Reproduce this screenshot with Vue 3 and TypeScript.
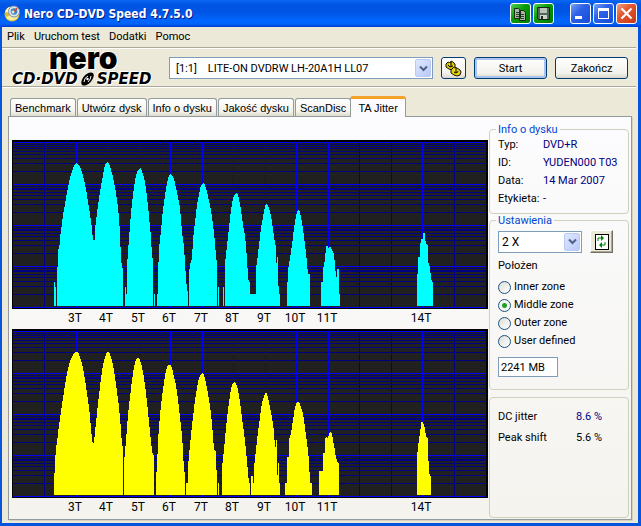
<script setup lang="ts">
import { ref } from 'vue'

type Point = [number, number]
interface Chart { name: string; color: string; peaks: Point[][] }

const BASE = 166
const menus = ['Plik', 'Uruchom test', 'Dodatki', 'Pomoc']
const tabs = ['Benchmark', 'Utwórz dysk', 'Info o dysku', 'Jakość dysku', 'ScanDisc', 'TA Jitter']
const activeTab = ref('TA Jitter')
const zones = ['Inner zone', 'Middle zone', 'Outer zone', 'User defined']
const zone = ref('Middle zone')
const position = ref('2241 MB')
const discInfo = [
  ['Typ:', 'DVD+R'],
  ['ID:', 'YUDEN000 T03'],
  ['Data:', '14 Mar 2007'],
  ['Etykieta:', '-'],
]

const decades = [2, 44, 85, 126, 167]
const minorOffsets = [2, 4, 6, 9, 12, 16, 21, 29]
const minors = decades.slice(0, 4).flatMap((d, i) => minorOffsets.map((o) => d + o - (i > 0 ? 1 : 0) + (i > 0 && o < 5 ? 1 : 0)))
const dimColumns = [32, 347, 379, 442]
const columns = [
  { x: 64, label: '3T' }, { x: 95, label: '4T' }, { x: 127, label: '5T' },
  { x: 158, label: '6T' }, { x: 190, label: '7T' }, { x: 221, label: '8T' },
  { x: 253, label: '9T' }, { x: 284, label: '10T' }, { x: 316, label: '11T' },
  { x: 410, label: '14T' },
]

const charts: Chart[] = [
  {
    name: 'Pit jitter',
    color: '#00ffff',
    peaks: [
      [[42, 142], [43, 142], [43, 147], [44, 147]],
      [[45, 127], [46, 127], [46, 107], [47, 110], [48, 100], [49, 89], [50, 85], [51, 74], [53, 65], [54, 57], [56, 48], [58, 38], [60, 31], [62, 26], [64, 23], [66, 24], [68, 27], [70, 32], [72, 40], [74, 49], [76, 62], [78, 74], [80, 89], [81, 100], [83, 100], [83, 89], [85, 73], [87, 58], [89, 46], [91, 35], [93, 25], [95, 22], [97, 23], [99, 30], [101, 37], [103, 47], [105, 60], [107, 77], [108, 95], [109, 118], [110, 128], [111, 128]],
      [[113, 147], [114, 147], [114, 154], [115, 154], [115, 128], [116, 110], [117, 100], [118, 85], [119, 73], [121, 55], [123, 40], [125, 32], [127, 29], [129, 28], [131, 34], [133, 42], [135, 57], [137, 75], [138, 88], [139, 95], [140, 118], [141, 118]],
      [[142, 154], [143, 154]],
      [[145, 154], [146, 154], [146, 134], [147, 110], [148, 98], [149, 92], [150, 78], [152, 62], [154, 49], [156, 38], [158, 34], [160, 35], [162, 39], [164, 48], [166, 57], [168, 68], [170, 92], [172, 107], [173, 122], [174, 140], [175, 147], [176, 154]],
      [[177, 134], [178, 125], [180, 118], [181, 100], [183, 82], [185, 65], [187, 54], [189, 45], [191, 43], [193, 45], [195, 52], [197, 61], [199, 70], [201, 85], [203, 102], [204, 118], [205, 122]],
      [[206, 147], [207, 147]],
      [[211, 147], [212, 147]],
      [[213, 124], [215, 105], [217, 88], [219, 70], [221, 58], [223, 54], [225, 52], [227, 59], [229, 70], [231, 85], [233, 95], [235, 118], [236, 137], [237, 142], [238, 142], [238, 154], [244, 154], [244, 128], [245, 122], [247, 105], [249, 88], [251, 77], [253, 67], [254, 64], [256, 65], [258, 71], [260, 82], [262, 97], [264, 108], [264, 123], [265, 123], [265, 117], [266, 117], [266, 137], [267, 154], [268, 154]],
      [[275, 154], [276, 130], [278, 118], [280, 105], [282, 88], [284, 76], [286, 70], [288, 72], [290, 82], [292, 97], [294, 113], [296, 134], [298, 134]],
      [[309, 142], [311, 142], [311, 129], [313, 120], [314, 106], [316, 106], [317, 109], [318, 106], [320, 110], [322, 114], [324, 137], [325, 137], [325, 129], [327, 129], [327, 154], [328, 154]],
      [[405, 134], [406, 134], [406, 117], [408, 117], [408, 107], [409, 99], [411, 99], [411, 93], [413, 93], [413, 100], [415, 105], [416, 105], [416, 122], [418, 127], [419, 138], [420, 142], [421, 142]],
    ],
  },
  {
    name: 'Land jitter',
    color: '#ffff00',
    peaks: [
      [[42, 154], [43, 134], [44, 119], [45, 113], [47, 96], [49, 83], [51, 69], [53, 56], [55, 44], [57, 36], [59, 30], [61, 26], [63, 23], [65, 23], [67, 25], [69, 31], [71, 39], [73, 51], [75, 64], [77, 78], [79, 99], [80, 111], [81, 115], [82, 113], [83, 103], [85, 84], [87, 66], [89, 49], [91, 36], [93, 28], [95, 23], [97, 23], [99, 28], [101, 36], [103, 48], [105, 63], [107, 78], [109, 101], [110, 116], [111, 118]],
      [[112, 133], [113, 124], [114, 111], [116, 86], [118, 68], [120, 51], [122, 38], [124, 30], [126, 29], [128, 31], [130, 38], [132, 49], [134, 64], [136, 83], [138, 103], [140, 121], [141, 126], [142, 126]],
      [[144, 148], [145, 139], [146, 111], [148, 86], [150, 68], [152, 53], [154, 41], [156, 36], [159, 36], [161, 43], [162, 48], [164, 56], [166, 71], [168, 88], [170, 106], [171, 121], [172, 143], [173, 143]],
      [[174, 154], [176, 154], [176, 139], [177, 126], [179, 106], [181, 88], [183, 71], [185, 59], [187, 49], [189, 45], [191, 44], [193, 49], [195, 59], [197, 71], [199, 84], [201, 106], [202, 121], [204, 123], [204, 141], [205, 141]],
      [[206, 154], [207, 154]],
      [[210, 138], [212, 121], [214, 99], [216, 81], [218, 66], [220, 56], [222, 53], [224, 54], [226, 61], [228, 73], [230, 89], [232, 104], [234, 121], [236, 143], [237, 154], [238, 154]],
      [[239, 147], [241, 147], [241, 154], [242, 154], [242, 138], [244, 121], [246, 103], [248, 88], [250, 74], [252, 67], [254, 63], [256, 68], [258, 78], [260, 88], [262, 103], [263, 118], [264, 118], [264, 111], [265, 111], [265, 146], [266, 146], [266, 134], [267, 134], [267, 154], [268, 154]],
      [[273, 154], [275, 154], [275, 128], [277, 128], [277, 111], [279, 104], [281, 91], [283, 78], [285, 73], [287, 73], [289, 78], [291, 84], [293, 99], [295, 114], [297, 131], [298, 154], [300, 154]],
      [[307, 142], [311, 142], [311, 124], [313, 124], [313, 109], [315, 108], [316, 110], [317, 104], [318, 103], [320, 104], [321, 111], [322, 116], [324, 129], [326, 134], [327, 134]],
      [[405, 129], [406, 118], [408, 104], [409, 96], [410, 91], [411, 94], [413, 99], [414, 108], [416, 109], [416, 121], [417, 142], [418, 147], [419, 147]],
    ],
  },
]

function outline(points: Point[]): string {
  const first = points[0][0]
  const last = points[points.length - 1][0]
  return `M${first} ${BASE}` + points.map(([x, y]) => `L${x} ${y}`).join('') + `L${last} ${BASE}Z`
}
</script>

<template>
  <div class="window">
    <header class="titlebar">
      <svg class="app-icon" width="17" height="17" viewBox="0 0 17 17" aria-hidden="true">
        <circle cx="8" cy="9" r="7.5" fill="#d8ba35" />
        <path d="M2 12A7 7 0 0 0 14 12L9 9Z" fill="#f8ed9b" />
        <path d="M1 7Q3 1 9 2L7 8Z" fill="#fff6b8" />
        <circle cx="10" cy="6.500" r="5.500" fill="#dfe6ed" stroke="#8090a8" />
        <circle cx="10" cy="6.500" r="3.300" fill="#3b87bd" />
        <path d="M10 7L13 3" stroke="#e34523" stroke-width="1.500" />
        <circle cx="9" cy="7" r="1.500" fill="#c7f0f4" />
      </svg>
      <h1>Nero CD-DVD Speed 4.7.5.0</h1>
      <div class="caption-group">
        <button class="cap green" aria-label="Kopiuj">
          <svg width="19" height="19" viewBox="0 0 19 19"><path d="M3.500 4.500h4l2 2v8h-6zM8.500 6.500h4l2 2v8h-6z" fill="#aab5a6" stroke="#162c16" /><path d="M5 8.500h3M5 10.500h3M5 12.500h3M10 10.500h3M10 12.500h3M10 14.500h3" stroke="#294329" /></svg>
        </button>
        <button class="cap green" aria-label="Zapisz">
          <svg width="19" height="19" viewBox="0 0 19 19"><path d="M3.500 3.500h12v12h-11l-1-1z" fill="#53665a" stroke="#122812" /><path d="M6 4h7v5H6z" fill="#b9c3b9" /><path d="M6 11h7v4H6z" fill="#ccd3cc" /><path d="M7 12h2v3H7z" fill="#1c2b1c" /></svg>
        </button>
      </div>
      <div class="caption-group">
        <button class="cap blue" aria-label="Minimalizuj"><svg width="19" height="19" viewBox="0 0 19 19"><path d="M4 12h7v3H4z" fill="#fff" /></svg></button>
        <button class="cap blue" aria-label="Maksymalizuj"><svg width="19" height="19" viewBox="0 0 19 19"><path d="M4 4h11v11H4zM5 7v7h9V7z" fill="#fff" fill-rule="evenodd" /></svg></button>
        <button class="cap red" aria-label="Zamknij"><svg width="19" height="19" viewBox="0 0 19 19"><path d="M4.500 4.500l10 10M14.500 4.500l-10 10" stroke="#fff" stroke-width="2.200" /></svg></button>
      </div>
    </header>

    <nav class="menubar">
      <button v-for="item in menus" :key="item">{{ item }}</button>
    </nav>

    <div class="toolbar">
      <div class="logo">
        <div class="logo-nero">nero</div>
        <div class="logo-speed">
          <span>CD·DVD</span>
          <svg width="15" height="14" viewBox="0 0 15 14" aria-hidden="true">
            <ellipse cx="7.500" cy="7" rx="8" ry="4.300" transform="rotate(-48 7.500 7)" fill="#000" />
            <path d="M4 10Q4 6 8 4M8 10Q11 7 11 4" fill="none" stroke="#fff" />
            <circle cx="7.500" cy="7" r="1.200" fill="#fff" />
          </svg>
          <span>SPEED</span>
        </div>
      </div>
      <div class="combo drive">
        <select aria-label="Napęd"><option>[1:1] &nbsp;&nbsp; LITE-ON DVDRW LH-20A1H LL07</option></select>
        <span class="arrow"><svg width="9" height="7" viewBox="0 0 9 7"><path d="M1 1.500l3.500 3.500L8 1.500" fill="none" stroke="#4d6185" stroke-width="2" /></svg></span>
      </div>
      <button class="push icon-push" aria-label="Opcje">
        <svg width="17" height="17" viewBox="0 0 17 17">
          <path d="M1 4l2-2 2 1 1-2 2 1 2 2v3l-3 3-3-1-3-2z" fill="#d4c400" stroke="#191500" />
          <path d="M6 10l3-3 3 1 3 2 1 2-1 3-3 1-3-1-3-2z" fill="#e3d300" stroke="#191500" />
          <path d="M6 2v4M3 5l2 2 3-1M11 8v4M9 12l2 1 3-2" fill="none" stroke="#000" />
          <path d="M4 4h1M8 6h1M9 10h1M13 11h1" stroke="#fff59a" />
        </svg>
      </button>
      <button class="push wide default">Start</button>
      <button class="push wide">Zakończ</button>
    </div>

    <main>
      <div class="tabs" role="tablist">
        <button v-for="tab in tabs" :key="tab" role="tab" :aria-selected="tab === activeTab" :class="{ active: tab === activeTab }" @click="activeTab = tab">{{ tab }}</button>
      </div>

      <section class="panel">
        <div class="charts">
          <svg v-for="chart in charts" :key="chart.name" class="chart" viewBox="0 0 476 189" role="img" :aria-label="chart.name">
            <g shape-rendering="crispEdges">
              <rect width="476" height="169" fill="#000" />
              <rect x="1" y="2" width="473" height="166" fill="#202020" />
              <rect v-for="y in minors" :key="'m' + y" x="1" :y="y" width="473" height="1" fill="#000084" />
              <rect v-for="x in dimColumns" :key="'d' + x" :x="x" y="2" width="1" height="166" fill="#000084" />
              <rect v-for="y in decades" :key="'h' + y" x="1" :y="y" width="473" height="1" fill="#0000ff" />
              <rect v-for="c in columns" :key="'c' + c.x" :x="c.x" y="2" width="1" height="166" fill="#0000f0" />
              <path v-for="(peak, i) in chart.peaks" :key="i" :d="outline(peak)" :fill="chart.color" />
            </g>
            <text v-for="c in columns" :key="c.label" :x="c.x - 1" y="182" text-anchor="middle">{{ c.label }}</text>
          </svg>
        </div>

        <aside>
          <fieldset class="info">
            <legend>Info o dysku</legend>
            <dl>
              <template v-for="row in discInfo" :key="row[0]"><dt>{{ row[0] }}</dt><dd>{{ row[1] }}</dd></template>
            </dl>
          </fieldset>

          <fieldset class="settings">
            <legend>Ustawienia</legend>
            <div class="speed-row">
              <div class="combo speed">
                <select aria-label="Prędkość"><option>2 X</option></select>
                <span class="arrow"><svg width="9" height="7" viewBox="0 0 9 7"><path d="M1 1.500l3.500 3.500L8 1.500" fill="none" stroke="#4d6185" stroke-width="2" /></svg></span>
              </div>
              <button class="refresh" aria-label="Odśwież">
                <svg width="15" height="17" viewBox="0 0 15 17">
                  <rect x="1" y="1" width="13" height="15" fill="#fff" stroke="#000" stroke-width="1" shape-rendering="crispEdges" />
                  <path d="M4 8V5h4M11 9v3H7" fill="none" stroke="#008000" />
                  <path d="M7 2l3 3-3 3zM8 9l-3 3 3 3z" fill="#008000" />
                </svg>
              </button>
            </div>
            <label class="position-label" for="position">Położen</label>
            <label v-for="z in zones" :key="z" class="radio"><input v-model="zone" type="radio" name="zone" :value="z">{{ z }}</label>
            <input id="position" v-model="position" class="position" type="text">
          </fieldset>

          <dl class="results">
            <dt>DC jitter</dt><dd class="navy">8.6 %</dd>
            <dt>Peak shift</dt><dd>5.6 %</dd>
          </dl>
        </aside>
      </section>
    </main>
  </div>
</template>

<style>
body {
  margin: 0;
  background: #ece9d8;
}
</style>

<style scoped>
* {
  box-sizing: border-box;
}

.window {
  min-height: 100vh;
  border: solid #0855dd;
  border-width: 0 3px 3px 2px;
  background: #ece9d8;
  color: #000;
  font-family: Roboto, "Liberation Sans", sans-serif;
  font-size: 11px;
}

button,
input,
select {
  margin: 0;
  padding: 0;
  color: inherit;
  font: inherit;
}

button {
  border: 0;
  background: none;
}

svg {
  display: block;
}

.titlebar {
  display: flex;
  align-items: center;
  gap: 8px;
  height: 27px;
  margin: 0 -3px 0 -2px;
  padding: 0 4px;
  background: linear-gradient(#0a66f4 0, #0054e3 5px, #0055e5 12px, #0066ff 21px, #0062f8 24px, #003dd0 27px);
}

.titlebar h1 {
  flex: 1;
  margin: 0 0 0 -5px;
  color: #fff;
  font-family: "DejaVu Sans Condensed", "DejaVu Sans", sans-serif;
  font-size: 12px;
  font-weight: bold;
  line-height: 18px;
  text-shadow: 1px 1px #0a1883;
}

.caption-group {
  display: flex;
  gap: 2px;
}

.caption-group + .caption-group {
  margin-left: 8px;
}

.cap {
  width: 21px;
  height: 21px;
  border: 1px solid #fff;
  border-radius: 3px;
}

.green {
  background: linear-gradient(135deg, #55cf55, #059a05 45%, #007d00);
}

.blue {
  background: linear-gradient(135deg, #7ba2f2, #2c62e8 40%, #174bd6);
}

.red {
  background: linear-gradient(135deg, #f0a088, #e2572f 40%, #c83a12);
}

.menubar {
  display: flex;
  gap: 9px;
  height: 20px;
  padding: 0 5px;
}

.menubar button {
  height: 18px;
}

.toolbar {
  display: flex;
  align-items: center;
  gap: 8px;
  height: 40px;
  margin-right: 2px;
  padding: 2px 8px 0 10px;
  border-top: 1px solid #aca899;
  border-bottom: 1px solid #aca899;
  box-shadow: inset 0 1px #fff, 0 1px #fff;
}

.logo {
  flex: none;
  width: 149px;
  height: 36px;
  text-shadow: 1px 1px #fff, -1px -1px #fff;
}

.logo-nero {
  height: 21px;
  padding-left: 37px;
  font: 900 30px/16px Inter, sans-serif;
}

.logo-speed {
  display: flex;
  align-items: center;
  height: 16px;
  font: italic bold 15px/16px "DejaVu Sans", sans-serif;
}

.logo-speed svg {
  margin: 0 2px;
}

.combo {
  display: grid;
  height: 22px;
  border: 1px solid #7f9db9;
  background: #fff;
}

.combo select,
.arrow {
  grid-area: 1 / 1;
}

.combo select {
  width: 100%;
  border: 0;
  background: none;
  appearance: none;
}

.arrow {
  display: grid;
  place-items: center;
  justify-self: end;
  width: 16px;
  margin: 1px;
  border: 1px solid #b9c9f4;
  border-radius: 2px;
  background: linear-gradient(135deg, #dfe8ff, #b7c9f7);
  pointer-events: none;
}

.drive {
  flex: 1;
}

.drive select {
  padding-left: 6px;
}

.push {
  display: grid;
  place-items: center;
  height: 22px;
  border: 1px solid #003c74;
  border-radius: 3px;
  background: linear-gradient(#fff, #f3f2ec 75%, #dcd7cb);
}

.icon-push {
  width: 25px;
}

.wide {
  width: 73px;
}

.default {
  box-shadow: inset 0 0 0 2px #a9c4f1;
}

main {
  padding: 9px 6px 3px;
}

.tabs {
  display: flex;
  align-items: flex-end;
  gap: 1px;
  height: 20px;
  padding-left: 2px;
  font-family: "Liberation Sans", Arial, sans-serif;
}

.tabs button {
  height: 18px;
  padding: 0 4px;
  border: 1px solid #919b9c;
  border-bottom: 0;
  border-radius: 3px 3px 0 0;
  background: linear-gradient(#fff, #f3f2ec 75%, #dedacb);
  white-space: nowrap;
}

.tabs .active {
  position: relative;
  height: 21px;
  margin: 0 0 -1px -2px;
  padding: 0 7px;
  border-top: 3px solid #f3a329;
  background: #fcfcfe;
}

.panel {
  display: flex;
  gap: 1px;
  padding: 0 2px 1px 3px;
  border: 1px solid #919b9c;
  background: linear-gradient(#fcfcfe, #f4f3ee);
  box-shadow: 1px 1px #d5d2c4;
}

.charts {
  flex: 1;
  min-width: 0;
  padding-top: 23px;
}

.chart {
  width: 100%;
  height: auto;
}

.chart text {
  fill: #000;
  font-size: 12px;
}

aside {
  flex: none;
  width: 140px;
  padding-top: 6px;
}

fieldset,
.results {
  min-width: 0;
  margin: 0;
  border: 1px solid #d0d0bf;
  border-radius: 4px;
}

fieldset {
  padding: 0 8px 5px;
}

legend {
  margin-left: -2px;
  padding: 0 2px;
  color: #0046d5;
  line-height: 13px;
}

dl {
  display: grid;
  margin: 0;
}

dd {
  margin: 0;
}

.info dl {
  grid-template-columns: 45px 1fr;
  line-height: 18px;
  white-space: nowrap;
}

.info dd,
.navy {
  color: #000080;
}

.settings {
  padding: 3px 8px 12px;
}

.speed-row {
  display: flex;
  align-items: center;
  gap: 8px;
}

.speed {
  width: 84px;
}

.speed select {
  padding-left: 3px;
  font-size: 12px;
}

.refresh {
  display: grid;
  place-items: center;
  width: 23px;
  height: 23px;
  border: 1px solid;
  border-color: #fff #716f64 #716f64 #fff;
  background: #ece9d8;
  box-shadow: inset -1px -1px #aca899;
}

.position-label {
  display: block;
  padding: 4px 0 3px;
  line-height: 18px;
}

.radio {
  display: flex;
  align-items: center;
  gap: 3px;
  line-height: 18px;
}

.radio input {
  width: 13px;
  height: 13px;
  border: 1px solid #1d5281;
  border-radius: 50%;
  background: linear-gradient(135deg, #dcdcd7, #fff);
  appearance: none;
}

.radio input:checked {
  background: radial-gradient(circle, #21a121 0 2px, #f4f4f2 3px);
}

.position {
  display: block;
  width: 60px;
  height: 20px;
  margin-top: 7px;
  padding-left: 2px;
  border: 1px solid #7f9db9;
  background: #fff;
}

.results {
  grid-template-columns: 78px 1fr;
  align-content: start;
  min-height: 121px;
  margin-top: 7px;
  padding: 8px;
  line-height: 21px;
}
</style>
